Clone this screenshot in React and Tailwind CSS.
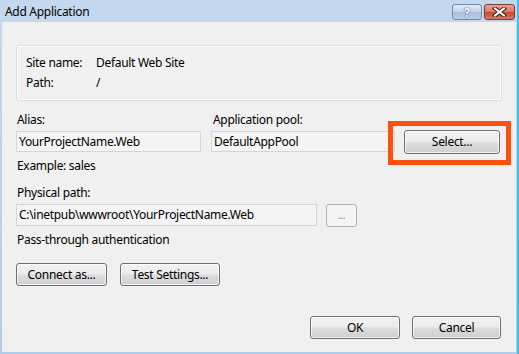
import React from "react";

const font = { fontFamily: '"Segoe UI", "Noto Sans", "Open Sans", sans-serif' };

const btn =
  "h-[23px] rounded-[3px] border border-[#707070] bg-[linear-gradient(to_bottom,#f2f2f2_0%,#ebebeb_48%,#dddddd_52%,#cfcfcf_100%)] shadow-[inset_0_0_0_1px_rgba(255,255,255,0.7)] text-[12px] text-black flex items-center justify-center";

function Field({ value, className }) {
  return (
    <div className={"h-[21px] border border-[#d6d6d6] bg-[#f4f4f4] flex items-center pl-[2px] text-[12px] text-black " + className}>
      {value}
    </div>
  );
}

function TitleButtons() {
  return (
    <div className="flex items-start gap-[2px] pt-[4px]">
      <div className="w-[30px] h-[16px] rounded-[3px] border border-[#6f8bad] bg-[linear-gradient(to_bottom,#dfe9f5_0%,#c4d5ea_48%,#a9bfdc_52%,#b9cde6_100%)] flex items-center justify-center text-[13px] font-bold leading-none text-white [text-shadow:0_0_1px_#2b3f5c,0_0_1px_#2b3f5c]">
        ?
      </div>
      <div className="w-[31px] h-[16px] rounded-[3px] border border-[#7a3a35] bg-[linear-gradient(to_bottom,#e8a393_0%,#d77a66_48%,#c24b34_52%,#d37c61_100%)] flex items-center justify-center">
        <svg width="15" height="10" viewBox="0 0 15 10">
          <path d="M3 1.5 L12 8.5 M12 1.5 L3 8.5" stroke="#3b1a14" strokeWidth="4" strokeLinecap="square" />
          <path d="M3 1.5 L12 8.5 M12 1.5 L3 8.5" stroke="#ffffff" strokeWidth="2" strokeLinecap="square" />
        </svg>
      </div>
    </div>
  );
}

export default function App() {
  return (
    <div style={font} className="w-[519px] h-[354px] flex flex-col tracking-[-0.3px] bg-[linear-gradient(to_bottom,#c4d8ee,#b3cce8)] border-r-[2px] border-r-[#45bde9]">
      <div className="h-[22px] flex items-start justify-between pl-[5px] pr-[2px]">
        <div className="text-[12px] text-black pt-[4px] leading-[16px]">Add Application</div>
        <TitleButtons />
      </div>

      <div className="flex-1 ml-[2px] mr-[1px] mb-[2px] bg-[#f0f0f0] flex flex-col pl-[14px] pr-[14px] text-[12px] text-black">
        <div className="mt-[23px] w-[486px] h-[56px] rounded-[3px] border border-[#d5dfe5] shadow-[inset_0_0_0_1px_#ffffff] flex flex-col justify-center pl-[9px]">
          <div className="flex h-[20px] items-center">
            <span className="w-[70px]">Site name:</span>
            <span>Default Web Site</span>
          </div>
          <div className="flex h-[20px] items-center">
            <span className="w-[70px]">Path:</span>
            <span>/</span>
          </div>
        </div>

        <div className="mt-[11px] flex items-start">
          <div className="flex flex-col w-[185px]">
            <div className="h-[16px] leading-[16px] pl-[1px]">Alias:</div>
            <Field value="YourProjectName.Web" className="mt-[3px] w-[185px]" />
          </div>
          <div className="flex flex-col ml-[10px] w-[184px]">
            <div className="h-[16px] leading-[16px] pl-[2px]">Application pool:</div>
            <Field value="DefaultAppPool" className="mt-[3px] w-[184px]" />
          </div>
          <div className="relative ml-[9px] mt-[18px]">
            <div className={btn + " w-[96px] h-[24px] border-[#3c7fb1] shadow-[inset_0_0_0_1px_#d6ecfa]"}>Select...</div>
            <div className="absolute left-[-16px] top-[-9px] w-[123px] h-[44px] border-[5px] border-[#fd4f0d]"></div>
          </div>
        </div>

        <div className="mt-[4px] h-[16px] leading-[16px] pl-[1px]">Example: sales</div>

        <div className="mt-[11px] h-[16px] leading-[16px] pl-[1px]">Physical path:</div>
        <div className="mt-[3px] flex items-start">
          <Field value="C:\inetpub\wwwroot\YourProjectName.Web" className="w-[301px] h-[22px]" />
          <div className="ml-[9px] w-[31px] h-[23px] rounded-[3px] border border-[#adb2b5] bg-[#f4f4f4] flex items-center justify-center text-[10px] text-[#838383]">
            ...
          </div>
        </div>

        <div className="mt-[5px] h-[16px] leading-[16px] pl-[1px]">Pass-through authentication</div>

        <div className="mt-[15px] flex gap-[13px]">
          <div className={btn + " w-[91px]"}>Connect as...</div>
          <div className={btn + " w-[100px]"}>Test Settings...</div>
        </div>

        <div className="mt-auto mb-[13px] flex justify-end gap-[12px] pr-[1px]">
          <div className={btn + " w-[90px]"}>OK</div>
          <div className={btn + " w-[89px]"}>Cancel</div>
        </div>
      </div>
    </div>
  );
}
